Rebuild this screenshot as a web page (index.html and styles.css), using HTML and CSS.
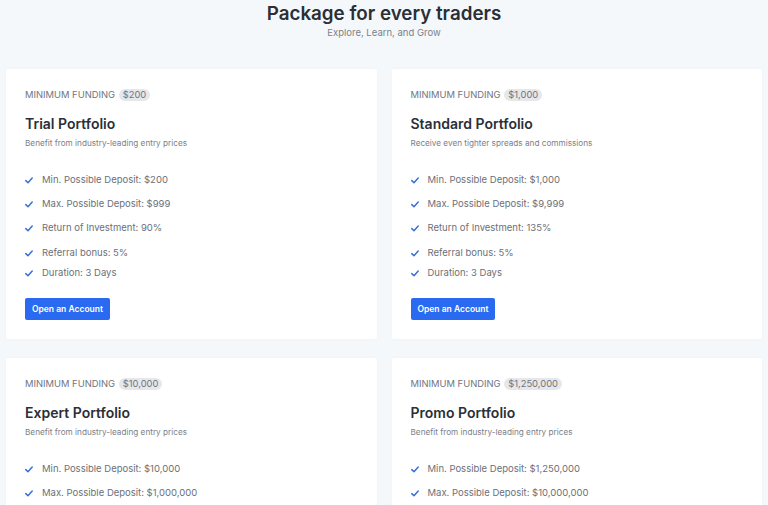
FILE: index.html
```html
<!DOCTYPE html>
<html>
<head>
<meta charset="utf-8">
<link rel="stylesheet" href="styles.css">
</head>
<body>
<header class="head">
  <h1 class="head-title">Package for every traders</h1>
  <p class="head-sub">Explore, Learn, and Grow</p>
</header>
<main class="grid">
  <section class="card">
    <div class="funding">MINIMUM FUNDING <span class="badge">$200</span></div>
    <h2 class="card-title">Trial Portfolio</h2>
    <p class="card-desc">Benefit from industry-leading entry prices</p>
    <ul class="features">
      <li><svg class="check" viewBox="0 0 8 7"><path d="M0.8 3.6 L3 5.7 L7.2 1"/></svg>Min. Possible Deposit: $200</li>
      <li><svg class="check" viewBox="0 0 8 7"><path d="M0.8 3.6 L3 5.7 L7.2 1"/></svg>Max. Possible Deposit: $999</li>
      <li><svg class="check" viewBox="0 0 8 7"><path d="M0.8 3.6 L3 5.7 L7.2 1"/></svg>Return of Investment: 90%</li>
      <li><svg class="check" viewBox="0 0 8 7"><path d="M0.8 3.6 L3 5.7 L7.2 1"/></svg>Referral bonus: 5%</li>
      <li><svg class="check" viewBox="0 0 8 7"><path d="M0.8 3.6 L3 5.7 L7.2 1"/></svg>Duration: 3 Days</li>
    </ul>
    <button class="btn">Open an Account</button>
  </section>
  <section class="card">
    <div class="funding">MINIMUM FUNDING <span class="badge">$1,000</span></div>
    <h2 class="card-title">Standard Portfolio</h2>
    <p class="card-desc">Receive even tighter spreads and commissions</p>
    <ul class="features">
      <li><svg class="check" viewBox="0 0 8 7"><path d="M0.8 3.6 L3 5.7 L7.2 1"/></svg>Min. Possible Deposit: $1,000</li>
      <li><svg class="check" viewBox="0 0 8 7"><path d="M0.8 3.6 L3 5.7 L7.2 1"/></svg>Max. Possible Deposit: $9,999</li>
      <li><svg class="check" viewBox="0 0 8 7"><path d="M0.8 3.6 L3 5.7 L7.2 1"/></svg>Return of Investment: 135%</li>
      <li><svg class="check" viewBox="0 0 8 7"><path d="M0.8 3.6 L3 5.7 L7.2 1"/></svg>Referral bonus: 5%</li>
      <li><svg class="check" viewBox="0 0 8 7"><path d="M0.8 3.6 L3 5.7 L7.2 1"/></svg>Duration: 3 Days</li>
    </ul>
    <button class="btn">Open an Account</button>
  </section>
  <section class="card">
    <div class="funding">MINIMUM FUNDING <span class="badge">$10,000</span></div>
    <h2 class="card-title">Expert Portfolio</h2>
    <p class="card-desc">Benefit from industry-leading entry prices</p>
    <ul class="features">
      <li><svg class="check" viewBox="0 0 8 7"><path d="M0.8 3.6 L3 5.7 L7.2 1"/></svg>Min. Possible Deposit: $10,000</li>
      <li><svg class="check" viewBox="0 0 8 7"><path d="M0.8 3.6 L3 5.7 L7.2 1"/></svg>Max. Possible Deposit: $1,000,000</li>
    </ul>
    <button class="btn">Open an Account</button>
  </section>
  <section class="card">
    <div class="funding">MINIMUM FUNDING <span class="badge">$1,250,000</span></div>
    <h2 class="card-title">Promo Portfolio</h2>
    <p class="card-desc">Benefit from industry-leading entry prices</p>
    <ul class="features">
      <li><svg class="check" viewBox="0 0 8 7"><path d="M0.8 3.6 L3 5.7 L7.2 1"/></svg>Min. Possible Deposit: $1,250,000</li>
      <li><svg class="check" viewBox="0 0 8 7"><path d="M0.8 3.6 L3 5.7 L7.2 1"/></svg>Max. Possible Deposit: $10,000,000</li>
    </ul>
    <button class="btn">Open an Account</button>
  </section>
</main>
</body>
</html>
```

FILE: styles.css
```css
* { box-sizing: border-box; }
html, body { margin: 0; padding: 0; }
body {
  background: #f5f8fb;
  font-family: Inter, "Noto Sans", sans-serif;
  overflow: hidden;
  height: 505px;
}
.head {
  text-align: center;
  padding-top: 3px;
}
.head-title {
  margin: 0;
  font-size: 18.8px;
  line-height: 22px;
  font-weight: 600;
  color: #2b2f36;
}
.head-sub {
  margin: 2px 0 0;
  font-size: 9.5px;
  line-height: 12px;
  color: #7b8089;
}
.grid {
  display: grid;
  grid-template-columns: 1fr 1fr;
  column-gap: 15px;
  row-gap: 19px;
  padding: 0 6px;
  margin-top: 30px;
}
.card {
  background: #ffffff;
  border-radius: 2px;
  padding: 20px 19px 19px;
  box-shadow: 0 0 2px rgba(120, 140, 170, 0.08);
}
.funding {
  font-size: 9.4px;
  line-height: 12px;
  color: #70757e;
}
.badge {
  display: inline-block;
  background: #e6e7ea;
  border-radius: 6px;
  padding: 0 4px;
  margin-left: 1px;
  line-height: 12px;
  color: #70757e;
}
.card-title {
  margin: 14px 0 0;
  font-size: 14px;
  line-height: 18px;
  font-weight: 600;
  color: #2b2f36;
}
.card-desc {
  margin: 4px 0 0;
  font-size: 8.2px;
  line-height: 12px;
  color: #7b8089;
}
.features {
  list-style: none;
  margin: 24px 0 0;
  padding: 0;
}
.features li {
  display: flex;
  align-items: center;
  font-size: 9.5px;
  line-height: 14px;
  color: #6b7079;
  margin-bottom: 10px;
}
.features li:nth-child(3) { margin-bottom: 11px; }
.features li:nth-child(4) { margin-bottom: 6px; }
.features li:last-child { margin-bottom: 0; }
.check {
  width: 8px;
  height: 7px;
  margin-right: 9px;
  fill: none;
  stroke: #3a6fd6;
  stroke-width: 1.5;
  stroke-linecap: round;
  stroke-linejoin: round;
}
.btn {
  display: block;
  margin-top: 18px;
  height: 22px;
  padding: 0 7px;
  border: 0;
  border-radius: 2px;
  background: #2a6af0;
  color: #ffffff;
  font-family: Inter, "Noto Sans", sans-serif;
  font-size: 8.5px;
  font-weight: 600;
}
```
